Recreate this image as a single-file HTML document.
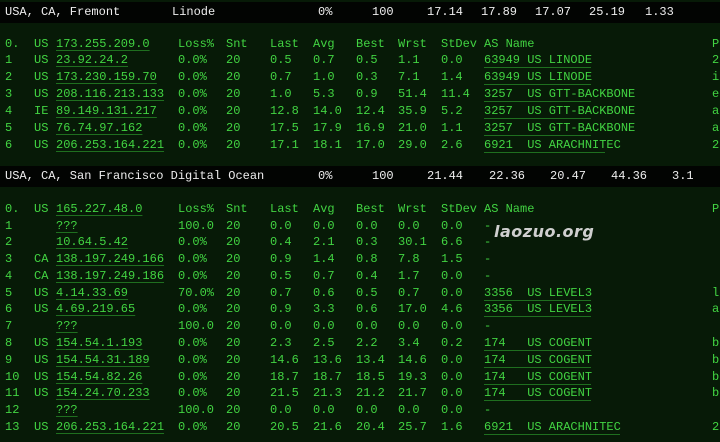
<!DOCTYPE html>
<html><head><meta charset="utf-8"><style>
html,body{margin:0;padding:0}
body{width:720px;height:442px;background:#071a07;position:relative;overflow:hidden;font-family:"Liberation Mono",monospace;font-size:12px;color:#42d442}
.bar{position:absolute;left:0;width:720px;height:21px;background:#020402;color:#eee}
.r{position:absolute;left:0;width:720px;height:17px;line-height:17px;white-space:pre}
.r span,.bar span{position:absolute;white-space:pre}
.bar span{line-height:21px}
u{text-decoration:underline;text-decoration-color:#1f6f1f;text-underline-offset:3px}
.as{display:inline-block;border-bottom:1px solid #1f6f1f;line-height:14px}
.wm{position:absolute;left:494px;top:222px;font-family:"DejaVu Sans",sans-serif;font-weight:bold;font-style:italic;font-size:16px;color:#cfcfcf;letter-spacing:0.5px}
</style></head><body>
<div class="bar" style="top:2px"><span style="left:5px">USA, CA, Fremont</span><span style="left:172px">Linode</span><span style="left:318px">0%</span><span style="left:372px">100</span><span style="left:427px">17.14</span><span style="left:481px">17.89</span><span style="left:535px">17.07</span><span style="left:589px">25.19</span><span style="left:645px">1.33</span></div>
<div class="bar" style="top:166px"><span style="left:5px">USA, CA, San Francisco Digital Ocean</span><span style="left:318px">0%</span><span style="left:372px">100</span><span style="left:427px">21.44</span><span style="left:489px">22.36</span><span style="left:550px">20.47</span><span style="left:611px">44.36</span><span style="left:672px">3.1</span></div>

<div id="t"></div>
<div class="wm">laozuo.org</div>
<script>
var cols=[5,34,56,178,226,270,313,356,398,441,484,712];
function row(y,c){var h='<div class="r" style="top:'+(y-8)+'px">';for(var i=0;i<c.length;i++){if(c[i]!=='')h+='<span style="left:'+cols[i]+'px">'+c[i]+'</span>';}return h+'</div>';}
function ip(s){return '<u>'+s+'</u>';}
function as(s,w){return '<span class="as" style="position:static;width:'+(w||107)+'px">'+s+'</span>';}
var h='';
var t1=[
['0.','US',ip('173.255.209.0'),'Loss%','Snt','Last','Avg','Best','Wrst','StDev','AS Name','P'],
['1','US',ip('23.92.24.2'),'0.0%','20','0.5','0.7','0.5','1.1','0.0',as('63949 US LINODE'),'2'],
['2','US',ip('173.230.159.70'),'0.0%','20','0.7','1.0','0.3','7.1','1.4',as('63949 US LINODE'),'i'],
['3','US',ip('208.116.213.133'),'0.0%','20','1.0','5.3','0.9','51.4','11.4',as('3257  US GTT-BACKBONE'),'e'],
['4','IE',ip('89.149.131.217'),'0.0%','20','12.8','14.0','12.4','35.9','5.2',as('3257  US GTT-BACKBONE'),'a'],
['5','US',ip('76.74.97.162'),'0.0%','20','17.5','17.9','16.9','21.0','1.1',as('3257  US GTT-BACKBONE'),'a'],
['6','US',ip('206.253.164.221'),'0.0%','20','17.1','18.1','17.0','29.0','2.6',as('6921  US ARACHNITEC',121),'2']];
var y1=[44,60,77,94,111,128,145];
t1.forEach(function(c,i){h+=row(y1[i],c);});
var C='174   US COGENT';
var t2=[
['0.','US',ip('165.227.48.0'),'Loss%','Snt','Last','Avg','Best','Wrst','StDev','AS Name','P'],
['1','',ip('???'),'100.0','20','0.0','0.0','0.0','0.0','0.0','-',''],
['2','',ip('10.64.5.42'),'0.0%','20','0.4','2.1','0.3','30.1','6.6','-',''],
['3','CA',ip('138.197.249.166'),'0.0%','20','0.9','1.4','0.8','7.8','1.5','-',''],
['4','CA',ip('138.197.249.186'),'0.0%','20','0.5','0.7','0.4','1.7','0.0','-',''],
['5','US',ip('4.14.33.69'),'70.0%','20','0.7','0.6','0.5','0.7','0.0',as('3356  US LEVEL3'),'l'],
['6','US',ip('4.69.219.65'),'0.0%','20','0.9','3.3','0.6','17.0','4.6',as('3356  US LEVEL3'),'a'],
['7','',ip('???'),'100.0','20','0.0','0.0','0.0','0.0','0.0','-',''],
['8','US',ip('154.54.1.193'),'0.0%','20','2.3','2.5','2.2','3.4','0.2',as(C),'b'],
['9','US',ip('154.54.31.189'),'0.0%','20','14.6','13.6','13.4','14.6','0.0',as(C),'b'],
['10','US',ip('154.54.82.26'),'0.0%','20','18.7','18.7','18.5','19.3','0.0',as(C),'b'],
['11','US',ip('154.24.70.233'),'0.0%','20','21.5','21.3','21.2','21.7','0.0',as(C),'b'],
['12','',ip('???'),'100.0','20','0.0','0.0','0.0','0.0','0.0','-',''],
['13','US',ip('206.253.164.221'),'0.0%','20','20.5','21.6','20.4','25.7','1.6',as('6921  US ARACHNITEC',136),'2']];
var y2=[209,226,242,259,276,293,309,326,343,360,377,393,410,427];
t2.forEach(function(c,i){h+=row(y2[i],c);});
document.getElementById('t').innerHTML=h;
</script>
</body></html>
